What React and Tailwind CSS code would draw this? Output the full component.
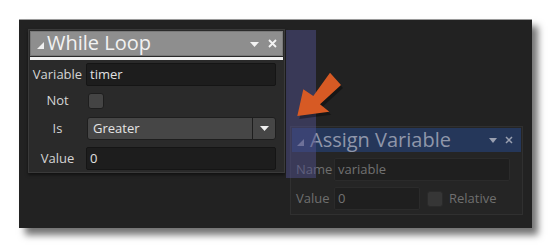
export default function App() {
  const font = { fontFamily: '"Open Sans", "Noto Sans", sans-serif' };
  return (
    <div className="w-[551px] h-[248px] bg-white pt-[19px] pl-[19px]" style={font}>
      <div className="relative w-[513px] h-[209px] bg-[#222222] border-t border-[#9a9a9a] shadow-[6px_7px_7px_rgba(0,0,0,0.55)] pt-[9px] pl-[9px]">
        {/* While Loop panel */}
        <div className="w-[257px] h-[144px] bg-[#2a2a2a] border border-[#3a3a3a] shadow-[0_2px_3px_rgba(0,0,0,0.5)] p-[1px]">
          <div className="h-[25px] bg-[#8e8e8e] border border-[#7a7a7a] flex items-center pl-[6px] pr-[5px]">
            <svg width="7" height="7" viewBox="0 0 7 7" className="mt-[4px]"><polygon points="7,0 7,7 0,7" fill="#f0f0f0" /></svg>
            <span className="ml-[3px] text-[20px] leading-[20px] text-[#f2f2f2] mt-[-1px]">While Loop</span>
            <div className="flex-1" />
            <svg width="9" height="5" viewBox="0 0 9 5" className="mt-[1px]"><polygon points="0,0 9,0 4.5,5" fill="#f4f4f4" /></svg>
            <svg width="9" height="9" viewBox="0 0 9 9" className="ml-[9px]"><path d="M1 1 L8 8 M8 1 L1 8" stroke="#f4f4f4" strokeWidth="1.8" /></svg>
          </div>
          <div className="h-[3px] mt-[1px] bg-[#f2f2f2]" />
          <div className="flex flex-col pt-[3px]">
            <div className="flex items-center h-[23px]">
              <div className="w-[55px] text-center text-[13px] text-[#d4d4d4]">Variable</div>
              <div className="w-[190px] h-[23px] ml-[1px] bg-[#1d1d1d] border border-[#151515] rounded-[2px] flex items-center pl-[3px] text-[13px] text-[#e0e0e0]">timer</div>
            </div>
            <div className="flex items-center h-[16px] mt-[7px]">
              <div className="w-[55px] text-center text-[13px] text-[#d4d4d4]">Not</div>
              <div className="w-[16px] h-[16px] ml-[3px] bg-[#444444] border border-[#1e1e1e] rounded-[3px]" />
            </div>
            <div className="flex items-center h-[23px] mt-[8px]">
              <div className="w-[55px] text-center text-[13px] text-[#d4d4d4]">Is</div>
              <div className="w-[189px] h-[23px] ml-[2px] bg-[#464646] border border-[#1e1e1e] rounded-[3px] flex items-center text-[13px] text-[#e4e4e4]">
                <span className="pl-[5px] flex-1">Greater</span>
                <div className="w-[23px] h-full border-l border-[#1e1e1e] flex items-center justify-center">
                  <svg width="9" height="5" viewBox="0 0 9 5"><polygon points="0,0 9,0 4.5,5" fill="#f0f0f0" /></svg>
                </div>
              </div>
            </div>
            <div className="flex items-center h-[23px] mt-[7px]">
              <div className="w-[55px] text-center text-[13px] text-[#d4d4d4]">Value</div>
              <div className="w-[190px] h-[23px] ml-[1px] bg-[#1d1d1d] border border-[#151515] rounded-[2px] flex items-center pl-[3px] text-[13px] text-[#e0e0e0]">0</div>
            </div>
          </div>
        </div>

        {/* Assign Variable panel (faded) */}
        <div className="absolute left-[271px] top-[106px] w-[233px] h-[89px] bg-[#252525] border border-[#303030] p-[1px]">
          <div className="h-[24px] bg-[#25375a] flex items-center pl-[5px] pr-[8px]">
            <svg width="7" height="7" viewBox="0 0 7 7" className="mt-[4px]"><polygon points="7,0 7,7 0,7" fill="#8c93a6" /></svg>
            <span className="ml-[6px] text-[20px] leading-[20px] text-[#8f96aa] mt-[-1px]">Assign Variable</span>
            <div className="flex-1" />
            <svg width="8" height="5" viewBox="0 0 8 5" className="mt-[1px]"><polygon points="0,0 8,0 4,5" fill="#9aa0b0" /></svg>
            <svg width="8" height="8" viewBox="0 0 8 8" className="ml-[8px]"><path d="M1 1 L7 7 M7 1 L1 7" stroke="#9aa0b0" strokeWidth="1.5" /></svg>
          </div>
          <div className="flex flex-col pt-[6px] pl-[4px]">
            <div className="flex items-center h-[23px]">
              <div className="w-[38px] text-[13px] text-[#6f6f6f]">Name</div>
              <div className="w-[176px] h-[23px] bg-[#1f1f1f] border border-[#2b2b2b] rounded-[2px] flex items-center pl-[3px] text-[13px] text-[#727272]">variable</div>
            </div>
            <div className="flex items-center h-[23px] mt-[6px]">
              <div className="w-[38px] text-[13px] text-[#6f6f6f]">Value</div>
              <div className="w-[86px] h-[23px] bg-[#1f1f1f] border border-[#2b2b2b] rounded-[2px] flex items-center pl-[3px] text-[13px] text-[#727272]">0</div>
              <div className="w-[16px] h-[16px] ml-[7px] bg-[#363636] border border-[#2a2a2a] rounded-[3px]" />
              <div className="ml-[6px] text-[13px] text-[#6f6f6f]">Relative</div>
            </div>
          </div>
        </div>

        {/* Blue strip overlay */}
        <div className="absolute left-[267px] top-[10px] w-[30px] h-[148px] bg-[rgba(80,80,140,0.5)]" />

        {/* Orange arrow */}
        <svg className="absolute left-[270px] top-[48px]" width="60" height="56" viewBox="270 48 60 56" style={{ overflow: 'visible' }}>
          <polygon points="278.3,96 284.3,69.3 294.3,76 311,52.7 322,65 301,84.3 310.3,91.7" fill="#000" opacity="0.35" transform="translate(2,3)" />
          <polygon points="278.3,96 284.3,69.3 294.3,76 311,52.7 322,65 301,84.3 310.3,91.7" fill="#d75a24" />
        </svg>
      </div>
    </div>
  );
}
